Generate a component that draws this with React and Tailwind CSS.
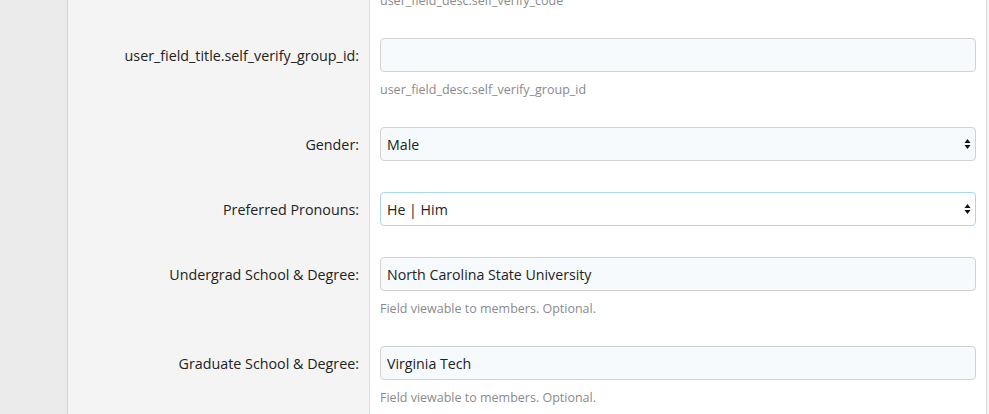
import React from "react";

const fieldCls =
  "w-full h-[34px] rounded-[4px] border pl-[6px] pr-[7px] pt-[1px] text-[14.2px] text-[#222] outline-none";

const SelectArrows = () => (
  <svg
    className="pointer-events-none absolute right-[5px] top-1/2 -translate-y-1/2"
    width="7"
    height="11"
    viewBox="0 0 7 11"
  >
    <path d="M3.5 0.5 L6.5 4.5 L0.5 4.5 Z" fill="#111" />
    <path d="M0.5 6.5 L6.5 6.5 L3.5 10.5 Z" fill="#111" />
  </svg>
);

const Row = ({ label, children, desc }) => (
  <div className="grid grid-cols-[301px_618px]">
    <div className="h-full pr-[10px]">
      <div className="h-[34px] pt-[2px] flex items-center justify-end text-[14.3px] text-[#222]">
        {label}
      </div>
    </div>
    <div
      className={
        desc
          ? "bg-white border-l border-r border-[#dcdcdc] px-[10px] pb-[29px]"
          : "bg-white border-l border-r border-[#dcdcdc] px-[10px] pb-[31px]"
      }
    >
      {children}
      {desc && (
        <div className="mt-[10px] leading-[16px] text-[12.5px] text-[#8a8a8a]">{desc}</div>
      )}
    </div>
  </div>
);

const App = () => {
  return (
    <div
      className="flex h-[414px] w-[989px] overflow-hidden bg-[#f4f4f4]"
      style={{ fontFamily: '"Open Sans", "Noto Sans", sans-serif' }}
    >
      <div className="w-[68px] shrink-0 bg-[#ebebeb] border-r border-[#d6d6d6]" />
      <div className="flex flex-col">
        {/* tail of previous field */}
        <div className="grid grid-cols-[301px_618px]">
          <div />
          <div className="bg-white border-l border-r border-[#dcdcdc] px-[10px] h-[38px]">
            <div className="-mt-[7px] leading-[16px] text-[12.5px] text-[#8a8a8a]">
              user_field_desc.self_verify_code
            </div>
          </div>
        </div>

        <Row label="user_field_title.self_verify_group_id:" desc="user_field_desc.self_verify_group_id">
          <input type="text" className={`${fieldCls} bg-[#f7fafd] border-[#d2d2d2]`} defaultValue="" />
        </Row>

        <Row label="Gender:">
          <div className="relative">
            <select className={`${fieldCls} appearance-none bg-[#f7fafd] border-[#d2d2d2]`} defaultValue="Male">
              <option>Male</option>
              <option>Female</option>
            </select>
            <SelectArrows />
          </div>
        </Row>

        <Row label="Preferred Pronouns:">
          <div className="relative">
            <select className={`${fieldCls} appearance-none bg-white border-[#a9d6f2]`} defaultValue="He | Him">
              <option>He | Him</option>
              <option>She | Her</option>
            </select>
            <SelectArrows />
          </div>
        </Row>

        <Row label="Undergrad School & Degree:" desc="Field viewable to members. Optional.">
          <input
            type="text"
            className={`${fieldCls} bg-[#f7fafd] border-[#d2d2d2]`}
            defaultValue="North Carolina State University"
          />
        </Row>

        <Row label="Graduate School & Degree:" desc="Field viewable to members. Optional.">
          <input type="text" className={`${fieldCls} bg-[#f7fafd] border-[#d2d2d2]`} defaultValue="Virginia Tech" />
        </Row>
      </div>
    </div>
  );
};

export default App;
